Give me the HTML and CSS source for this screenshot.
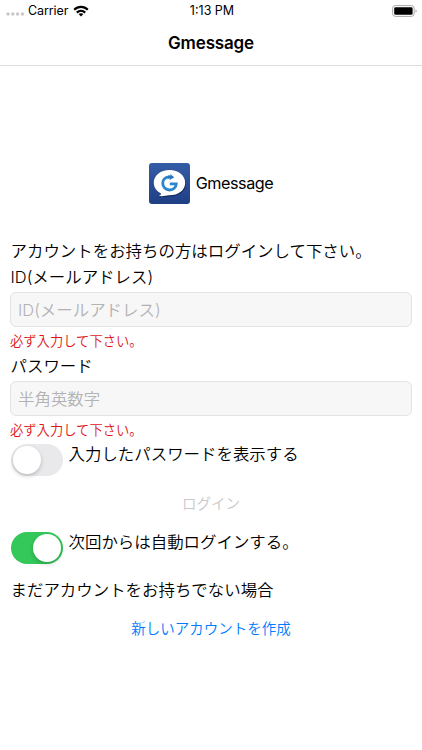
FILE: index.html
```
<!doctype html>
<html lang="ja">

<head>
    <meta charset="UTF-8">
    <meta name="viewport" content="width=device-width, initial-scale=1">
    <title>Gmessage</title>

    <!-- CSS -->
    <link rel="stylesheet" href="styles.css">
</head>

<body>
    <!-- Status bar -->
    <div class="status-bar">
        <div class="carrier">
            <svg class="signal" width="19" height="4" viewBox="0 0 19 4" fill="#c8c8c8">
                <circle cx="2" cy="2" r="1.7" />
                <circle cx="6.8" cy="2" r="1.7" />
                <circle cx="11.6" cy="2" r="1.7" />
                <circle cx="16.4" cy="2" r="1.7" />
            </svg>
            <span>Carrier</span>
            <svg class="wifi" width="16" height="12" viewBox="0 0 16 12" fill="none" stroke="#000" stroke-width="2.2">
                <path d="M1.2 4.8C5 1 11 1 14.8 4.8" />
                <path d="M3.8 7.6C6.2 5.3 9.8 5.3 12.2 7.6" />
                <path d="M8 11.6L5.6 9.1C7 7.9 9 7.9 10.4 9.1Z" fill="#000" stroke="none" />
            </svg>
        </div>
        <div class="time">1:13 PM</div>
        <svg class="battery" width="26" height="12" viewBox="0 0 26 12">
            <rect x="0.6" y="0.6" width="21.6" height="10.8" rx="2.8" fill="#fff" stroke="#a8a8a8" />
            <rect x="2.2" y="2.2" width="18.4" height="7.6" rx="1.4" fill="#000" />
            <path d="M23.6 4.2C25 4.6 25 7.4 23.6 7.8Z" fill="#a0a0a0" />
        </svg>
    </div>

    <h1 class="nav-title">Gmessage</h1>

    <div class="logo">
        <svg width="41" height="41" viewBox="0 0 41 41">
            <defs>
                <linearGradient id="logo-bg" x1="0" y1="0" x2="0" y2="1">
                    <stop offset="0" stop-color="#345ca6" />
                    <stop offset="1" stop-color="#203f85" />
                </linearGradient>
            </defs>
            <rect width="41" height="41" rx="3" fill="url(#logo-bg)" />
            <path d="M21 8C12 8 5.5 13.2 5.5 20.5C5.5 25 8 28.8 12.2 31C12.5 32 11.5 33 10 33.8C14 34.2 17.5 34 20 33.4C30 33.6 37 28 37 20.7C37 13.5 30 8 21 8Z" fill="#142b61" />
            <path d="M20.5 7C11.5 7 4.8 12.5 4.8 19.6C4.8 24.5 7.5 28.3 12 30.5C12.2 31.6 11.2 32.4 9.6 33C13.5 33.4 17 33 19.5 32.3C29.5 32.5 36.2 27 36.2 19.7C36.2 12.5 29.5 7 20.5 7Z" fill="#fff" />
            <path d="M20.5 14C16.2 14 13.7 16.8 13.7 20.3C13.7 24.2 16.7 27 20.5 27C24.4 27 27 24.4 27.2 20.9H20.8" fill="none" stroke="#2c86cb" stroke-width="2.8" />
            <path d="M19 12.6H21.7L20.9 10.8L25.3 14.2L20.4 17.2L21.2 15.4H19Z" fill="#2c75bd" />
        </svg>
        <span>Gmessage</span>
    </div>

    <form class="login">
        <p class="text">アカウントをお持ちの方はログインして下さい。</p>

        <label class="text" for="user-id">ID(メールアドレス)</label>
        <input class="field" id="user-id" type="text" placeholder="ID(メールアドレス)">
        <p class="error">必ず入力して下さい。</p>

        <label class="text" for="password">パスワード</label>
        <input class="field" id="password" type="password" placeholder="半角英数字">
        <p class="error">必ず入力して下さい。</p>

        <label class="option">
            <input class="switch" type="checkbox">
            <span>入力したパスワードを表示する</span>
        </label>

        <button class="button" type="submit" disabled>ログイン</button>

        <label class="option">
            <input class="switch" type="checkbox" checked>
            <span>次回からは自動ログインする。</span>
        </label>

        <p class="text no-account">まだアカウントをお持ちでない場合</p>
        <button class="button create" type="button">新しいアカウントを作成</button>
    </form>
</body>

</html>
```
FILE: styles.css
```
* {
    box-sizing: border-box;
}

body {
    margin: 0;
    background-color: #fff;
    color: #000;
    font-family: Inter, "Noto Sans CJK JP", sans-serif;
    font-size: 16.5px;
}

p {
    margin: 0;
}

.status-bar {
    display: grid;
    grid-template-columns: 1fr auto 1fr;
    align-items: center;
    height: 21px;
    padding: 0 4px 0 6px;
    font-size: 12.5px;
}

.carrier {
    display: flex;
    align-items: center;
}

.carrier span {
    letter-spacing: -0.1px;
}

.signal {
    margin: 6px 3px 0 0;
}

.wifi {
    margin-left: 5px;
}

.battery {
    justify-self: end;
}

.nav-title {
    height: 45px;
    margin: 0;
    border-bottom: 1px solid #dcdcdc;
    font-size: 17px;
    font-weight: 600;
    letter-spacing: -0.15px;
    line-height: 45px;
    text-align: center;
}

.logo {
    display: flex;
    align-items: center;
    justify-content: center;
    gap: 6px;
    margin-top: 97px;
    font-size: 16.2px;
    letter-spacing: -0.45px;
}

.logo span {
    padding-bottom: 1px;
}

.login {
    display: flex;
    flex-direction: column;
    padding: 34px 10px 0;
    font-size: 16.45px;
    font-weight: 350;
}

.text {
    height: 26px;
    padding-left: 0.5px;
    line-height: 26px;
}

.field {
    height: 35px;
    margin: 2px 0;
    padding: 0 7px;
    border: 1px solid #e3e3e3;
    border-radius: 6px;
    outline: none;
    background-color: #f7f7f7;
    font: inherit;
}

.field::placeholder {
    color: #b3b3b3;
}

.error {
    height: 24px;
    color: #e0161b;
    font-size: 13.3px;
    line-height: 25px;
}

.option {
    display: flex;
    gap: 6px;
    height: 32px;
    line-height: 21px;
}

.error + .option {
    margin-top: 2px;
}

.switch {
    appearance: none;
    width: 52px;
    height: 32px;
    margin: 0 0 0 0.5px;
    padding: 2px;
    border-radius: 16px;
    background-color: #e9e9eb;
}

.switch::before {
    content: "";
    display: block;
    width: 28px;
    height: 28px;
    border-radius: 50%;
    background-color: #fff;
    box-shadow: 0 2px 4px rgba(0, 0, 0, 0.2);
}

.switch:checked {
    background-color: #34c759;
}

.switch:checked::before {
    margin-left: auto;
}

.button {
    align-self: center;
    height: 24px;
    margin: 16px 0;
    padding: 0;
    border: 0;
    background: none;
    color: #007aff;
    font: inherit;
    font-size: 14.5px;
    line-height: 24px;
}

.button:disabled {
    color: #c8c8c8;
}

.no-account {
    margin-top: 13px;
}

.create {
    margin-top: 14px;
}
```
